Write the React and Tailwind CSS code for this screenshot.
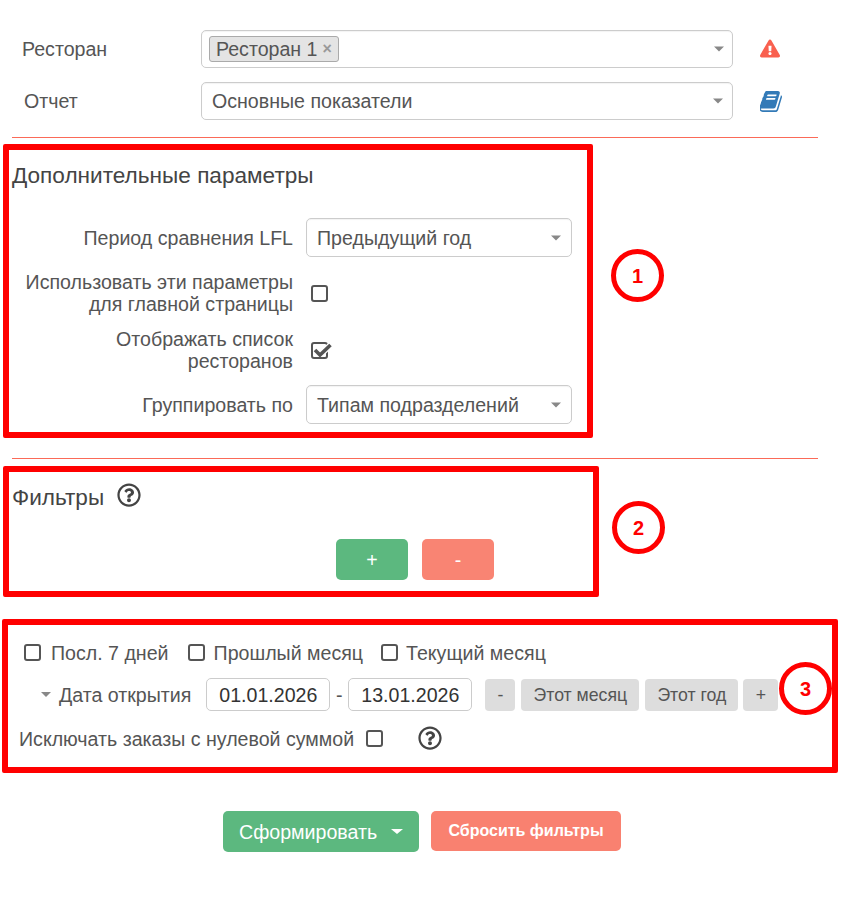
import React from "react";
import { FaExclamationTriangle, FaRegQuestionCircle } from "react-icons/fa";

const Arrow = ({ className = "" }) => (
  <span className={"block w-0 h-0 border-x-[5px] border-x-transparent border-t-[5px] border-t-[#888] " + className} />
);

const Select = ({ className = "", children, arrowClass = "right-[9px]" }) => (
  <div className={"relative flex items-center rounded-[5px] border border-[#ccc] bg-white shadow-[inset_0_1px_1px_rgba(0,0,0,0.05)] " + className}>
    {children}
    <Arrow className={"absolute top-1/2 -translate-y-1/2 " + arrowClass} />
  </div>
);

const Check = ({ checked = false, className = "" }) => (
  <span className={"relative block w-[17px] h-[17px] shrink-0 rounded-[3px] border-2 border-[#555] " + className}>
    {checked && (
      <svg viewBox="0 0 22 17" className="absolute left-[-2px] top-[-2px] w-[22px] h-[17px]">
        <path d="M9 13 L19.5 3" fill="none" stroke="#fff" strokeWidth="6" />
        <path d="M4 8 L9 13 L19.5 3" fill="none" stroke="#555" strokeWidth="3.6" />
      </svg>
    )}
  </span>
);

const Book = ({ className = "" }) => (
  <svg viewBox="128 128 1536 1536" className={className} fill="currentColor">
    <path d="M1639 478q40 57 18 129l-275 906q-19 64-76.5 107.5t-122.5 43.5h-923q-77 0-148.5-53.5t-99.5-131.5q-24-67-2-127 0-4 3-27t4-37q1-8-3-21.5t-3-19.5q2-11 8-21t16.5-23.5 16.5-23.5q23-38 45-91.5t30-91.5q3-10 .5-30t-.5-28q3-11 17-28t17-23q21-36 42-92t25-90q1-9-2.5-32t.5-28q4-13 22-30.5t22-22.5q19-26 42.5-84.5t27.5-96.5q1-8-3-25.5t-2-26.5q2-8 9-18t18-23 17-21q8-12 16.5-30.5t15-35 16-36 19.5-32 26.5-23.5 36-11.5 47.5 5.5l-1 3q38-9 51-9h761q74 0 114 56t18 130l-274 906q-36 119-71.5 153.5t-128.5 34.5h-869q-27 0-38 15-11 16-1 43 24 70 144 70h923q29 0 56-15.5t35-41.5l300-987q7-22 5-57 38 15 59 43zm-1064 2q-4 13 2 22.5t20 9.5h608q13 0 25.5-9.5t16.5-22.5l21-64q4-13-2-22.5t-20-9.5h-608q-13 0-25.5 9.5t-16.5 22.5zm-83 256q-4 13 2 22.5t20 9.5h608q13 0 25.5-9.5t16.5-22.5l21-64q4-13-2-22.5t-20-9.5h-608q-13 0-25.5 9.5t-16.5 22.5z" />
  </svg>
);

const Help = ({ className = "" }) => <FaRegQuestionCircle className={"text-[#444] " + className} />;

const GrayBtn = ({ className = "", children }) => (
  <span className={"flex items-center justify-center h-[32px] rounded-[4px] bg-[#ddd] text-[17.7px] text-[#555] " + className}>{children}</span>
);

const DateInput = ({ children }) => (
  <span className="flex items-center justify-center w-[124px] h-[33px] rounded-[5px] border border-[#ccc] bg-white text-[#333]">{children}</span>
);

const Mark = ({ className, children }) => (
  <div className={"absolute pointer-events-none " + className}>{children}</div>
);

const Badge = ({ className, children }) => (
  <div className={"absolute flex items-center justify-center w-[53px] h-[53px] rounded-full border-[5px] border-[#f00] bg-white text-[#f00] font-bold text-[20px] " + className}>{children}</div>
);

const Rule = ({ className = "" }) => <div className={"mx-[12px] w-[806px] h-px bg-[#fb6a58] " + className} />;

export default function App() {
  return (
    <div className="relative w-[841px] h-[901px] overflow-hidden bg-white pt-[30px] text-[19.6px] leading-[22px] text-[#555] font-['Liberation_Sans',Arial,sans-serif]">
      <div className="flex items-center h-[38px]">
        <div className="w-[201px] pl-[22px]">Ресторан</div>
        <Select className="w-[532px] h-[38px] pl-[7px]" arrowClass="right-[8px]">
          <span className="flex items-center h-[26px] rounded-[3px] border border-[#aaa] bg-[#e4e4e4] pl-[6px] pr-[6px]">
            Ресторан 1<span className="ml-[5px] text-[16px] font-bold text-[#999]">×</span>
          </span>
        </Select>
        <FaExclamationTriangle className="ml-[27px] w-[20px] h-[19px] -translate-y-[1px] text-[#f9604f]" />
      </div>
      <div className="flex items-center h-[38px] mt-[14px]">
        <div className="w-[201px] pl-[24px]">Отчет</div>
        <Select className="w-[532px] h-[38px] pl-[10px]" arrowClass="right-[9px]">Основные показатели</Select>
        <Book className="ml-[27px] w-[23px] h-[21px] text-[#337ab7]" />
      </div>
      <Rule className="mt-[17px]" />

      <h3 className="ml-[12px] mt-[26px] h-[24px] text-[22.6px] leading-[24px] font-normal text-[#444]">Дополнительные параметры</h3>
      <div className="mt-[30px] flex flex-col">
        <div className="flex items-center h-[39px]">
          <div className="w-[293px] text-right">Период сравнения LFL</div>
          <Select className="ml-[13px] w-[266px] h-[39px] pl-[10px]" arrowClass="right-[10px]">Предыдущий год</Select>
        </div>
        <div className="flex items-center h-[46px] mt-[13px]">
          <div className="w-[293px] text-right">Использовать эти параметры<br />для главной страницы</div>
          <Check className="ml-[18px]" />
        </div>
        <div className="flex items-center h-[46px] mt-[11px]">
          <div className="w-[293px] text-right">Отображать список<br />ресторанов</div>
          <Check checked className="ml-[18px]" />
        </div>
        <div className="flex items-center h-[39px] mt-[12px]">
          <div className="w-[293px] text-right">Группировать по</div>
          <Select className="ml-[13px] w-[266px] h-[39px] pl-[10px]" arrowClass="right-[10px]">Типам подразделений</Select>
        </div>
      </div>

      <Rule className="mt-[34px]" />

      <div className="ml-[12px] mt-[27px] flex items-center h-[24px]">
        <h3 className="text-[22.6px] leading-[24px] font-normal text-[#444]">Фильтры</h3>
        <Help className="ml-[13px] w-[24px] h-[24px] -translate-y-[3px]" />
      </div>
      <div className="mt-[29px] ml-[336px] flex gap-[14px]">
        <span className="flex items-center justify-center w-[72px] h-[41px] rounded-[5px] bg-[#5cb87f] text-white">+</span>
        <span className="flex items-center justify-center w-[72px] h-[41px] rounded-[5px] bg-[#f98473] text-white">-</span>
      </div>

      <div className="mt-[61px] ml-[24px] flex items-center h-[23px]">
        <Check />
        <span className="ml-[10px]">Посл. 7 дней</span>
        <Check className="ml-[19px]" />
        <span className="ml-[9px]">Прошлый месяц</span>
        <Check className="ml-[18px]" />
        <span className="ml-[8px]">Текущий месяц</span>
      </div>

      <div className="mt-[14px] ml-[41px] flex items-center h-[33px]">
        <Arrow className="border-t-[#555]" />
        <span className="ml-[8px]">Дата открытия</span>
        <span className="ml-[15px]"><DateInput>01.01.2026</DateInput></span>
        <span className="w-[18px] text-center">-</span>
        <DateInput>13.01.2026</DateInput>
        <GrayBtn className="ml-[13px] w-[30px]">-</GrayBtn>
        <GrayBtn className="ml-[6px] w-[118px]">Этот месяц</GrayBtn>
        <GrayBtn className="ml-[6px] w-[93px]">Этот год</GrayBtn>
        <GrayBtn className="ml-[5px] w-[35px]">+</GrayBtn>
      </div>

      <div className="mt-[16px] ml-[19px] flex items-center h-[23px]">
        <span>Исключать заказы с нулевой суммой</span>
        <Check className="ml-[12px]" />
        <Help className="ml-[35px] w-[24px] h-[24px] -translate-y-[1px]" />
      </div>

      <div className="mt-[61px] ml-[223px] flex items-start gap-[12px]">
        <span className="flex items-center w-[196px] h-[41px] rounded-[5px] bg-[#5cb87f] pl-[16px] text-white">
          Сформировать
          <span className="ml-[14px] block w-0 h-0 border-x-[6px] border-x-transparent border-t-[5px] border-t-white" />
        </span>
        <span className="flex items-center justify-center w-[190px] h-[40px] rounded-[5px] bg-[#f98170] text-[16px] font-bold text-white">Сбросить фильтры</span>
      </div>

      <Mark className="left-[3px] top-[144px] w-[590px] h-[294px] border-[6px] border-[#f00] rounded-[2px]" />
      <Mark className="left-[3px] top-[466px] w-[596px] h-[131px] border-[6px] border-[#f00] rounded-[2px]" />
      <Mark className="left-[2px] top-[619px] w-[836px] h-[154px] border-[6px] border-[#f00] rounded-[2px]" />
      <Badge className="left-[611px] top-[249px]">1</Badge>
      <Badge className="left-[612px] top-[501px]">2</Badge>
      <Badge className="left-[779px] top-[662px]">3</Badge>
    </div>
  );
}
